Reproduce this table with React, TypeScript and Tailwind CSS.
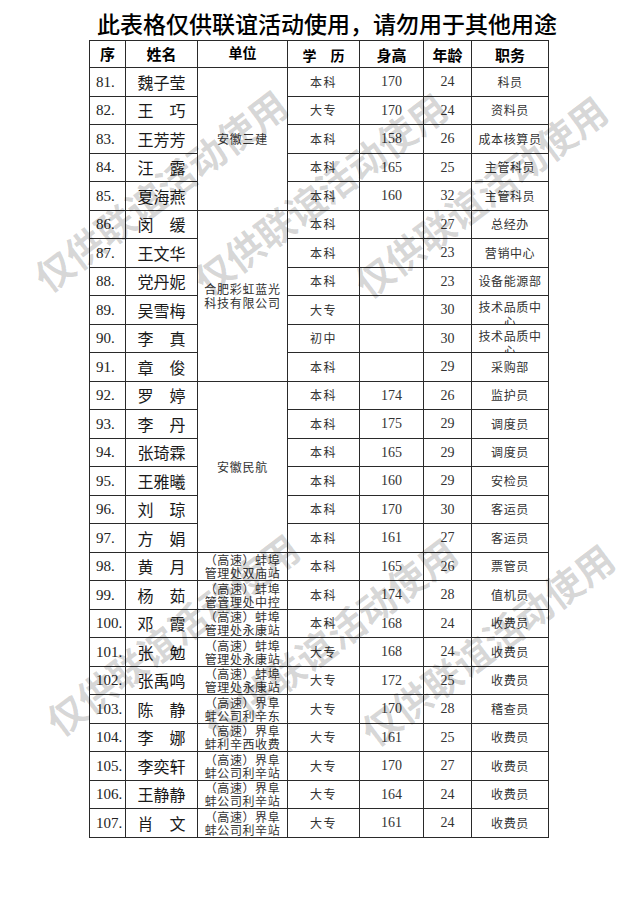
import React from "react";

type Row = {
  no: string;
  name: string;
  edu: string;
  h: string;
  age: string;
  job: React.ReactNode;
  unit?: [string, string];
  clip?: boolean;
};

const rows: Row[] = [
  { no: "81.", name: "魏子莹", edu: "本科", h: "170", age: "24", job: "科员" },
  { no: "82.", name: "王　巧", edu: "大专", h: "170", age: "24", job: "资料员" },
  { no: "83.", name: "王芳芳", edu: "本科", h: "158", age: "26", job: "成本核算员" },
  { no: "84.", name: "汪　露", edu: "本科", h: "165", age: "25", job: "主管科员" },
  { no: "85.", name: "夏海燕", edu: "本科", h: "160", age: "32", job: "主管科员" },
  { no: "86.", name: "闵　缓", edu: "本科", h: "", age: "27", job: "总经办" },
  { no: "87.", name: "王文华", edu: "本科", h: "", age: "23", job: "营销中心" },
  { no: "88.", name: "党丹妮", edu: "本科", h: "", age: "23", job: "设备能源部" },
  { no: "89.", name: "吴雪梅", edu: "大专", h: "", age: "30", job: "技术品质中", clip: true },
  { no: "90.", name: "李　真", edu: "初中", h: "", age: "30", job: "技术品质中", clip: true },
  { no: "91.", name: "章　俊", edu: "本科", h: "", age: "29", job: "采购部" },
  { no: "92.", name: "罗　婷", edu: "本科", h: "174", age: "26", job: "监护员" },
  { no: "93.", name: "李　丹", edu: "本科", h: "175", age: "29", job: "调度员" },
  { no: "94.", name: "张琦霖", edu: "本科", h: "165", age: "29", job: "调度员" },
  { no: "95.", name: "王雅曦", edu: "本科", h: "160", age: "29", job: "安检员" },
  { no: "96.", name: "刘　琼", edu: "本科", h: "170", age: "30", job: "客运员" },
  { no: "97.", name: "方　娟", edu: "本科", h: "161", age: "27", job: "客运员" },
  { no: "98.", name: "黄　月", edu: "本科", h: "165", age: "26", job: "票管员", unit: ["（高速）蚌埠", "管理处双庙站"] },
  { no: "99.", name: "杨　茹", edu: "本科", h: "174", age: "28", job: "值机员", unit: ["（高速）蚌埠", "管管理处中控"] },
  { no: "100.", name: "邓　霞", edu: "本科", h: "168", age: "24", job: "收费员", unit: ["（高速）蚌埠", "管理处永康站"] },
  { no: "101.", name: "张　勉", edu: "大专", h: "168", age: "24", job: "收费员", unit: ["（高速）蚌埠", "管理处永康站"] },
  { no: "102.", name: "张禹鸣", edu: "大专", h: "172", age: "25", job: "收费员", unit: ["（高速）蚌埠", "管理处永康站"] },
  { no: "103.", name: "陈　静", edu: "大专", h: "170", age: "28", job: "稽查员", unit: ["（高速）界阜", "蚌公司利辛东"] },
  { no: "104.", name: "李　娜", edu: "大专", h: "161", age: "25", job: "收费员", unit: ["（高速）界阜", "蚌利辛西收费"] },
  { no: "105.", name: "李奕轩", edu: "大专", h: "170", age: "27", job: "收费员", unit: ["（高速）界阜", "蚌公司利辛站"] },
  { no: "106.", name: "王静静", edu: "大专", h: "164", age: "24", job: "收费员", unit: ["（高速）界阜", "蚌公司利辛站"] },
  { no: "107.", name: "肖　文", edu: "大专", h: "161", age: "24", job: "收费员", unit: ["（高速）界阜", "蚌公司利辛站"] },
];

const cell = "border-r border-b border-[#2a2a2a] flex items-center justify-center overflow-hidden";
const serif = "font-['Liberation_Serif','Noto_Sans_CJK_SC',serif]";
const cjk = "font-['Noto_Sans_CJK_SC','Noto_Sans_CJK_TC',sans-serif]";

const marks = [
  "left-[160px] top-[190px]",
  "left-[320px] top-[193px]",
  "left-[480px] top-[196px]",
  "left-[172px] top-[634px]",
  "left-[330px] top-[638px]",
  "left-[487px] top-[644px]",
];

export default function App() {
  return (
    <div className="relative w-[636px] h-[900px] bg-white overflow-hidden">
      <div className={`h-[40px] pt-[10px] pl-[18px] text-center text-[23px] leading-[26px] text-black font-medium ${cjk}`}>
        此表格仅供联谊活动使用，请勿用于其他用途
      </div>
      <div
        className={`ml-[89px] w-[460px] grid grid-cols-[36px_72px_90px_72px_64px_48px_77px] grid-rows-[27px_repeat(27,28.5px)] border-l border-t border-[#2a2a2a] ${serif}`}
      >
        <div className={`${cell} ${cjk} font-bold text-[15px] text-black`}>序</div>
        <div className={`${cell} ${cjk} font-bold text-[15px] text-black`}>姓名</div>
        <div className={`${cell} ${cjk} font-bold text-[14px] text-black !items-start pt-[1px]`}>单位</div>
        <div className={`${cell} ${cjk} font-bold text-[14px] text-black pt-[2px]`}>学　历</div>
        <div className={`${cell} ${cjk} font-bold text-[15px] text-black pt-[2px]`}>身高</div>
        <div className={`${cell} ${cjk} font-bold text-[15px] text-black pt-[2px]`}>年龄</div>
        <div className={`${cell} ${cjk} font-bold text-[15px] text-black pt-[2px]`}>职务</div>

        {rows.map((r, i) => (
          <React.Fragment key={r.no}>
            <div className={`${cell} !justify-start pl-[6px] text-[15px] text-[#222]`}>{r.no}</div>
            <div className={`${cell} ${cjk} text-[16px] text-[#1a1a1a]`}>{r.name}</div>
            {i === 0 && (
              <div className={`${cell} row-span-5 ${cjk} text-[12px] tracking-[0.75px] text-[#333]`}>安徽三建</div>
            )}
            {i === 5 && (
              <div className={`${cell} row-span-6 ${cjk} text-[12px] leading-[14px] tracking-[0.75px] text-[#333] text-center`}>
                合肥彩虹蓝光
                <br />
                科技有限公司
              </div>
            )}
            {i === 11 && (
              <div className={`${cell} row-span-6 ${cjk} text-[12px] tracking-[0.75px] text-[#333]`}>安徽民航</div>
            )}
            {r.unit && (
              <div className={`${cell} ${cjk} text-[12px] leading-[13px] tracking-[0.6px] text-[#333] text-center`}>
                {r.unit[0]}
                <br />
                {r.unit[1]}
              </div>
            )}
            <div className={`${cell} ${cjk} text-[12px] tracking-[1.5px] text-[#333]`}>{r.edu}</div>
            <div className={`${cell} text-[14px] text-[#333]`}>{r.h}</div>
            <div className={`${cell} text-[14px] text-[#333]`}>{r.age}</div>
            {r.clip ? (
              <div className={`${cell} !items-start pt-[3px] ${cjk} text-[12px] leading-[15px] tracking-[0.6px] text-[#333] text-center`}>
                <span>
                  {r.job}
                  <br />心
                </span>
              </div>
            ) : (
              <div className={`${cell} ${cjk} text-[12px] tracking-[0.6px] text-[#333]`}>{r.job}</div>
            )}
          </React.Fragment>
        ))}
      </div>

      {marks.map((m) => (
        <div
          key={m}
          className={`pointer-events-none absolute ${m} -translate-x-1/2 -translate-y-1/2 -rotate-[37deg] whitespace-nowrap ${cjk} font-bold text-[38px] leading-none text-[rgba(0,0,0,0.16)]`}
        >
          仅供联谊活动使用
        </div>
      ))}
    </div>
  );
}
